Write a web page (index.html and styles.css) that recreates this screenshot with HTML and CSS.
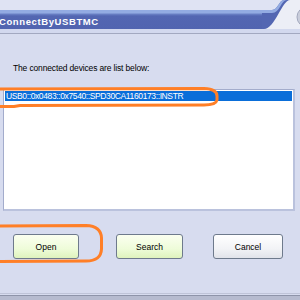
FILE: index.html
```html
<!DOCTYPE html>
<html>
<head>
<meta charset="utf-8">
<link rel="stylesheet" href="styles.css">
</head>
<body>
<div class="window">
  <div class="titlebar">
    <div class="titlecell">
      <div class="band"><span class="title">ConnectByUSBTMC</span></div>
    </div>
    <svg class="curve" width="38" height="29" viewBox="0 0 38 29">
      <rect x="0" y="0" width="38" height="29" fill="#eceef6"/>
      <path d="M0 0 L22 0 C17 0 16 10 10 10 L0 10 Z" fill="#dfe3f3"/>
      <path d="M0 10 L10 10 C16 10 17 0 22 0 L28 0 C20 0 13 29 2 29 L0 29 Z" fill="#5366b2"/>
      <path d="M0 10 L10 10 C16 10 17 0 22 0 L25 0 C19 0 18 13 10 13 L0 13 Z" fill="#93abe2"/>
      <circle cx="45" cy="17" r="10" fill="#c9cddb" stroke="#a2a8bd" stroke-width="1"/>
    </svg>
  </div>
  <div class="content">
    <p class="label">The connected devices are list below:</p>
    <div class="listbox">
      <div class="item selected">USB0::0x0483::0x7540::SPD30CA1160173::INSTR</div>
    </div>
    <div class="buttons">
      <button class="btn btn-green btn-open">Open</button>
      <button class="btn btn-green btn-search">Search</button>
      <button class="btn btn-plain btn-cancel">Cancel</button>
    </div>
  </div>
  <div class="footer"></div>
  <svg class="marks" width="300" height="300" viewBox="0 0 300 300">
    <path d="M-10 89 L204 88.5 Q217 89 217 96 L217 100 Q216 105 204 105 L20 105.5 L14 106.5 L-10 106.5" fill="none" stroke="#ff7f27" stroke-width="3" stroke-linejoin="round"/>
    <path d="M-10 226 L86 225.5 Q101 226 101.5 238 L101.5 249 Q101 261 86 261 L-10 261.5" fill="none" stroke="#ff7f27" stroke-width="3" stroke-linejoin="round"/>
  </svg>
</div>
</body>
</html>
```
FILE: styles.css
```css
html, body {
  margin: 0;
  padding: 0;
}
body {
  width: 300px;
  height: 300px;
  overflow: hidden;
  background: #d7dcef;
  font-family: "Liberation Sans", Arial, sans-serif;
}
.window {
  position: relative;
  width: 300px;
  height: 300px;
  display: flex;
  flex-direction: column;
  background: #d7dcef;
}
.titlebar {
  display: flex;
  height: 33px;
  background: #d2d8ee;
  border-bottom: 1px solid #a2a8c0;
  flex: none;
}
.titlecell {
  flex: 1;
  padding-top: 10px;
  background: linear-gradient(#dfe3f3 0 10px, transparent 10px);
}
.band {
  height: 19px;
  background: linear-gradient(#93abe2 0, #93abe2 3px, #6c82c6 4px, #5366b2 6px, #5164b0 100%);
  overflow: hidden;
}
.title {
  display: block;
  margin-left: -1px;
  padding-top: 6px;
  line-height: 11px;
  color: #ffffff;
  font-weight: bold;
  font-size: 9.5px;
  letter-spacing: 0.6px;
}
.curve {
  flex: none;
  display: block;
}
.content {
  flex: 1;
  display: flex;
  flex-direction: column;
}
.label {
  margin: 28px 0 0 13px;
  font-size: 8.5px;
  line-height: 12px;
  letter-spacing: -0.15px;
  color: #000;
}
.listbox {
  margin: 15px 0 0 3px;
  width: 287px;
  height: 117px;
  background: #ffffff;
  border-top: 1px solid #a3accc;
  border-left: 1px solid #a3accc;
  border-right: 2px solid #bac2dd;
  border-bottom: 2px solid #bac2dd;
  padding: 1px;
  box-sizing: content-box;
}
.item {
  height: 10px;
  line-height: 10px;
  font-size: 8.5px;
  letter-spacing: -0.38px;
  padding-left: 1px;
  white-space: nowrap;
}
.selected {
  background: #0a6ed9;
  color: #ffffff;
}
.buttons {
  margin-top: 23px;
  display: grid;
  grid-template-columns: 13px 66px 37px 67px 30px 70px;
  height: 25px;
}
.btn {
  height: 25px;
  padding: 0;
  border: 1px solid #6e7a8c;
  border-radius: 3px;
  font-family: "Liberation Sans", Arial, sans-serif;
  font-size: 8.5px;
  color: #000;
}
.btn-open { grid-column: 2; }
.btn-search { grid-column: 4; }
.btn-cancel { grid-column: 6; }
.btn-green {
  background: linear-gradient(#fbfff0, #eefcd9 60%, #dff3bd);
}
.btn-plain {
  background: linear-gradient(#ffffff, #f2f3f6 60%, #e1e3ea);
}
.footer {
  flex: none;
  height: 6px;
  border-top: 1px solid #bfc4d8;
  background: linear-gradient(#d7dcef 0 1px, #8e94a9 1px 2px, #b6bbcf 2px);
}
.marks {
  position: absolute;
  left: 0;
  top: 0;
  pointer-events: none;
}
```
